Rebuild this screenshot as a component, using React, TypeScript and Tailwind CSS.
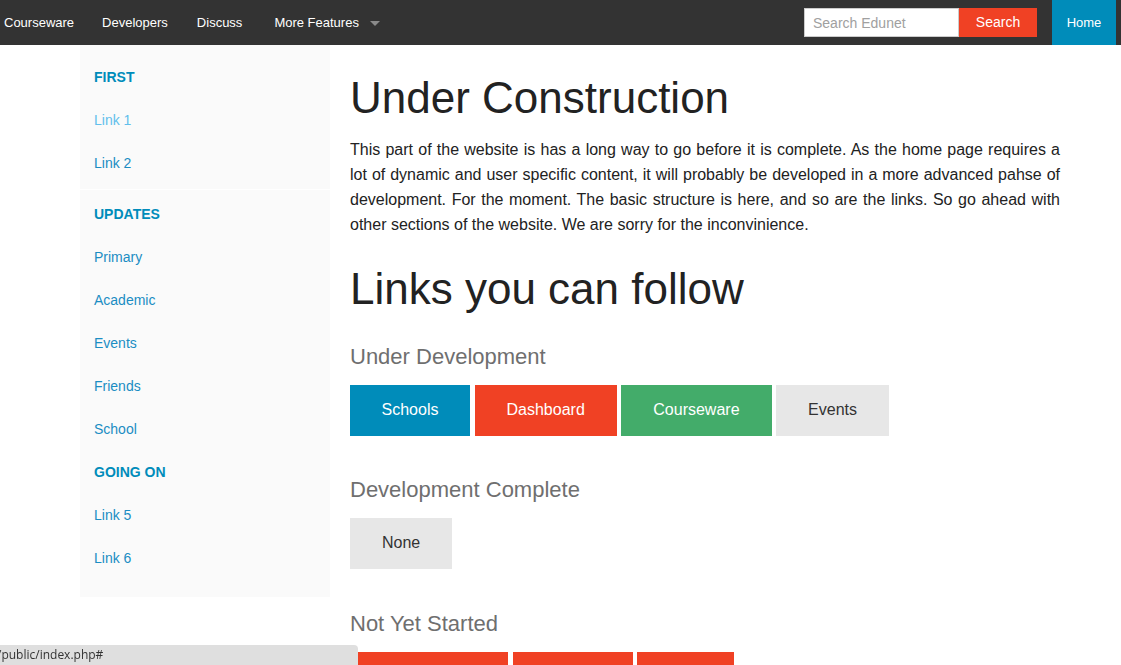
import React from "react";

const navItems = ["Courseware", "Developers", "Discuss"];

function SideHeading({ children }: { children: React.ReactNode }) {
  return (
    <li className="h-[43px] flex items-center px-[14px] text-[14px] font-bold uppercase text-[#008cba]">
      {children}
    </li>
  );
}

function SideLink({ children, hover }: { children: React.ReactNode; hover?: boolean }) {
  return (
    <li className="h-[43px] flex items-center px-[14px] text-[14px]">
      <a href="#" className={hover ? "text-[#62bfec]" : "text-[#1b8dc3]"}>
        {children}
      </a>
    </li>
  );
}

function Btn({
  children,
  color,
  className = "",
}: {
  children?: React.ReactNode;
  color: string;
  className?: string;
}) {
  return (
    <a
      href="#"
      className={`inline-block px-[32px] pt-[16px] pb-[17px] text-[16px] leading-[18px] text-center ${color} ${className}`}
    >
      {children}
    </a>
  );
}

export default function App() {
  return (
    <div
      className="min-h-screen bg-white text-[#222]"
      style={{ fontFamily: '"Liberation Sans", Arial, Helvetica, sans-serif' }}
    >
      {/* Top bar */}
      <nav className="flex h-[45px] items-center bg-[#333333] text-white">
        <ul className="flex h-full items-center text-[13px]">
          {navItems.map((n, i) => (
            <li
              key={n}
              className={`flex h-full items-center ${
                i === 0 ? "pl-[4px] pr-[14px]" : i === 1 ? "px-[14px]" : "pl-[15px] pr-[14px]"
              }`}
            >
              <a href="#">{n}</a>
            </li>
          ))}
          <li className="flex h-full items-center pl-[18px] pr-[15px]">
            <a href="#">More Features</a>
            <span className="ml-[11px] mt-[1px] h-0 w-0 border-x-[5px] border-t-[5px] border-x-transparent border-t-[#8a8a8a]" />
          </li>
        </ul>
        <div className="ml-auto flex h-full items-center">
          <input
            type="text"
            placeholder="Search Edunet"
            className="h-[29px] w-[155px] border border-[#cccccc] bg-white px-[8px] text-[14px] text-[#333] placeholder:text-[#a0a0a0] outline-none"
          />
          <button className="h-[29px] w-[78px] bg-[#f04124] text-[14px] text-white">
            Search
          </button>
          <a
            href="#"
            className="ml-[15px] mr-[5px] flex h-full w-[64px] items-center justify-center bg-[#008cba] text-[13px] text-white"
          >
            Home
          </a>
        </div>
      </nav>

      <div className="flex items-start">
        {/* Sidebar */}
        <aside className="ml-[80px] w-[250px] shrink-0 bg-[#fafafa] pt-[11px] pb-[17px]">
          <ul>
            <SideHeading>First</SideHeading>
            <SideLink hover>Link 1</SideLink>
            <SideLink>Link 2</SideLink>
            <li className="mt-[4px] mb-[3px] h-[1px] bg-white" />
            <SideHeading>Updates</SideHeading>
            <SideLink>Primary</SideLink>
            <SideLink>Academic</SideLink>
            <SideLink>Events</SideLink>
            <SideLink>Friends</SideLink>
            <SideLink>School</SideLink>
            <SideHeading>Going On</SideHeading>
            <SideLink>Link 5</SideLink>
            <SideLink>Link 6</SideLink>
          </ul>
        </aside>

        {/* Main */}
        <main className="ml-[20px] w-[710px] pt-[22px]">
          <h1 className="text-[44px] leading-[61px] font-normal text-[#222]">
            Under Construction
          </h1>
          <p className="mt-[9px] text-justify text-[16px] leading-[25px] text-[#222]">
            This part of the website is has a long way to go before it is complete. As the home
            page requires a lot of dynamic and user specific content, it will probably be developed
            in a more advanced pahse of development. For the moment. The basic structure is here,
            and so are the links. So go ahead with other sections of the website. We are sorry for
            the inconvinience.
          </p>
          <h2 className="mt-[21px] text-[44px] leading-[61px] font-normal text-[#222]">
            Links you can follow
          </h2>

          <h4 className="mt-[22px] text-[22px] leading-[31px] text-[#6f6f6f]">
            Under Development
          </h4>
          <div className="mt-[13px] flex gap-[4.5px]">
            <Btn color="bg-[#008cba] text-white" className="w-[120px] !px-0">Schools</Btn>
            <Btn color="bg-[#f04124] text-white">Dashboard</Btn>
            <Btn color="bg-[#43ac6a] text-white">Courseware</Btn>
            <Btn color="bg-[#e7e7e7] text-[#333]" className="w-[113px] !px-0">Events</Btn>
          </div>

          <h4 className="mt-[38px] text-[22px] leading-[31px] text-[#6f6f6f]">
            Development Complete
          </h4>
          <div className="mt-[13px] flex">
            <Btn color="bg-[#e7e7e7] text-[#333]">None</Btn>
          </div>

          <h4 className="mt-[39px] text-[22px] leading-[31px] text-[#6f6f6f]">
            Not Yet Started
          </h4>
          <div className="mt-[13px] flex gap-[4.5px]">
            <Btn color="bg-[#f04124] text-white" className="h-[51px] w-[158px] !px-0" />
            <Btn color="bg-[#f04124] text-white" className="h-[51px] w-[120px] !px-0" />
            <Btn color="bg-[#f04124] text-white" className="h-[51px] w-[97px] !px-0" />
          </div>
          <div className="h-[60px]" />
        </main>
      </div>

      {/* Browser status bar overlay */}
      <div
        className="fixed bottom-0 left-0 flex h-[20px] w-[358px] items-center overflow-hidden rounded-tr-[4px] bg-[#dfdfdf] text-[12px] text-[#333]"
        style={{ fontFamily: '"Open Sans", "DejaVu Sans", sans-serif' }}
      >
        <span className="-ml-[3px]">/public/index.php#</span>
      </div>
    </div>
  );
}
